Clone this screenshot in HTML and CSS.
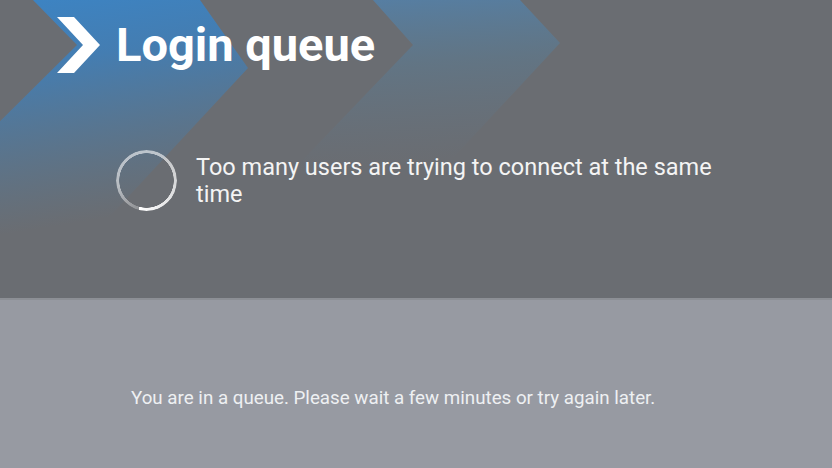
FILE: index.html
```html
<!DOCTYPE html>
<html lang="en">
<head>
    <meta charset="UTF-8">
    <meta name="viewport" content="width=device-width, initial-scale=1.0">
    <title>Login queue</title>
    <link rel="stylesheet" href="styles.css">
</head>
<body>
    <div class="page">
        <header class="hero">
            <!-- decorative chevrons behind the header -->
            <svg class="hero-bg" width="832" height="298" viewBox="0 0 832 298" aria-hidden="true">
                <defs>
                    <linearGradient id="fade-a" x1="0" y1="0" x2="0.25" y2="1">
                        <stop offset="0" stop-color="#3a86c9" stop-opacity="1"/>
                        <stop offset="0.35" stop-color="#3d80bd" stop-opacity="0.85"/>
                        <stop offset="1" stop-color="#4b7da6" stop-opacity="0"/>
                    </linearGradient>
                    <linearGradient id="fade-b" x1="0" y1="0" x2="0.1" y2="1">
                        <stop offset="0" stop-color="#4f84b4" stop-opacity="0.8"/>
                        <stop offset="0.35" stop-color="#55809f" stop-opacity="0.4"/>
                        <stop offset="0.8" stop-color="#5c7890" stop-opacity="0"/>
                    </linearGradient>
                </defs>
                <polygon points="33,0 200,0 248,68 88,240 -120,240 77,45" fill="url(#fade-a)"/>
                <polygon points="373,0 520,0 560,43 400,215 250,215 413,45" fill="url(#fade-b)"/>
            </svg>

            <h1 class="title">
                <svg class="logo" width="44" height="56" viewBox="0 0 44 56" aria-hidden="true">
                    <polygon points="0,0 17,0 43,28 17,56 0,56 26,28" fill="#fff"/>
                </svg>
                Login queue
            </h1>

            <div class="status">
                <span class="spinner"></span>
                <p class="status-text">Too many users are trying to connect at the same time</p>
            </div>
        </header>

        <section class="notice">
            <p>You are in a queue. Please wait a few minutes or try again later.</p>
        </section>
    </div>
</body>
</html>
```

FILE: styles.css
```css
:root {
    --hero-color: #6a6d72;
    --notice-color: #979aa2;
    --divider-color: #8c8f95;
    --text-color: #f4f4f4;
}

* {
    box-sizing: border-box;
}

body {
    margin: 0;
    font-family: Roboto, "Liberation Sans", sans-serif;
    color: var(--text-color);
    background: var(--notice-color);
}

.page {
    width: 832px;
    height: 468px;
    overflow: hidden;
}

.hero {
    position: relative;
    height: 300px;
    padding: 17px 40px 0 57px;
    background: var(--hero-color);
    border-bottom: 2px solid var(--divider-color);
    overflow: hidden;
}

.hero-bg {
    position: absolute;
    top: 0;
    left: 0;
}

.title {
    position: relative;
    display: flex;
    align-items: center;
    gap: 15px;
    margin: 0;
    height: 56px;
    font-size: 47px;
    font-weight: 700;
    line-height: 56px;
    color: #fff;
}

.logo {
    display: block;
    flex-shrink: 0;
}

.status {
    position: relative;
    display: flex;
    align-items: center;
    gap: 19px;
    margin: 77px 0 0 59px;
}

.spinner {
    flex-shrink: 0;
    width: 61px;
    height: 61px;
    border-radius: 50%;
    background: conic-gradient(from 195deg,
        rgba(255, 255, 255, 0.25) 0%,
        rgba(255, 255, 255, 0.55) 18%,
        rgba(255, 255, 255, 0.6) 55%,
        rgba(255, 255, 255, 0.8) 80%,
        #fff 100%);
    -webkit-mask: radial-gradient(circle, transparent 27px, #000 27.5px);
    mask: radial-gradient(circle, transparent 27px, #000 27.5px);
}

.status-text {
    margin: 0;
    max-width: 545px;
    font-size: 23.5px;
    line-height: 27px;
    font-weight: 400;
}

.notice {
    padding: 87px 0 0 131px;
}

.notice p {
    margin: 0;
    font-size: 18.75px;
    line-height: 22px;
    color: #eef0f2;
}
```
